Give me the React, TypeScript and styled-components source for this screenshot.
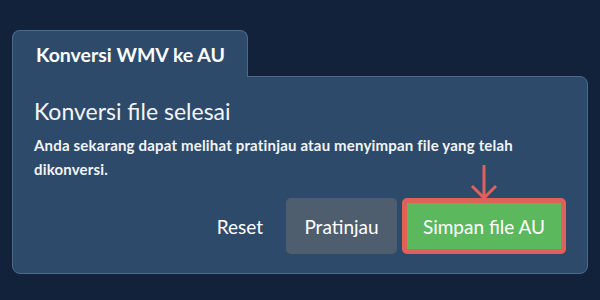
import * as React from 'react';
import styled, { createGlobalStyle } from 'styled-components';

const GlobalStyle = createGlobalStyle`
  html, body {
    margin: 0;
    padding: 0;
    background-color: #11223a;
    font-family: Lato, "Open Sans", sans-serif;
  }
`;

const Page = styled.div`
  width: 600px;
  height: 300px;
  box-sizing: border-box;
  padding: 30px 12px 0 12px;
`;

const Tab = styled.div`
  position: relative;
  z-index: 1;
  display: inline-flex;
  align-items: center;
  box-sizing: border-box;
  width: 236px;
  height: 47px;
  margin-bottom: -1px;
  padding-left: 23px;
  background-color: #2e4a6a;
  border: 1px solid #4d6a8c;
  border-bottom: none;
  border-radius: 8px 8px 0 0;
  color: #ffffff;
  font-size: 19.5px;
  font-weight: 700;
`;

const Panel = styled.div`
  box-sizing: border-box;
  height: 198px;
  padding: 19px 21px 19px 21px;
  background-color: #2e4a6a;
  border: 1px solid #4d6a8c;
  border-radius: 0 8px 8px 8px;
  color: #f2f4f7;
  display: flex;
  flex-direction: column;
`;

const Heading = styled.h2`
  margin: 0;
  font-size: 23px;
  font-weight: 400;
  line-height: 30px;
`;

const Message = styled.p`
  margin: 7px 0 0 0;
  font-size: 15px;
  font-weight: 700;
  line-height: 24px;
  letter-spacing: 0.18px;
`;

const Actions = styled.div`
  margin-top: auto;
  display: flex;
  justify-content: flex-end;
  align-items: center;
  gap: 5px;
`;

const Button = styled.button<{ $variant: 'link' | 'muted' | 'primary' }>`
  position: relative;
  box-sizing: border-box;
  height: 56px;
  padding: 0;
  border-radius: 5px;
  font-family: Lato, "Open Sans", sans-serif;
  font-size: 19px;
  font-weight: 400;
  color: #ffffff;
  cursor: pointer;
  background-color: ${p =>
    p.$variant === 'primary' ? '#5cb85c' : p.$variant === 'muted' ? '#4e5e6f' : 'transparent'};
  border: ${p => (p.$variant === 'primary' ? '5px solid #e0605a' : 'none')};
  margin-right: ${p => (p.$variant === 'link' ? '18px' : '0')};
`;

const Pointer = styled.svg`
  position: absolute;
  left: 50%;
  bottom: 100%;
  margin-bottom: 3px;
  transform: translateX(-50%);
`;

const App: React.FC = () => {
  return (
    <>
      <GlobalStyle />
      <Page>
        <Tab>Konversi WMV ke AU</Tab>
        <Panel>
          <Heading>Konversi file selesai</Heading>
          <Message>
            Anda sekarang dapat melihat pratinjau atau menyimpan file yang telah dikonversi.
          </Message>
          <Actions>
            <Button $variant="link">Reset</Button>
            <Button $variant="muted" style={{ width: 111 }}>Pratinjau</Button>
            <Button $variant="primary" style={{ width: 164 }}>
              Simpan file AU
              <Pointer width="28" height="36" viewBox="0 0 28 36">
                <path
                  d="M14 1 V34 M2 22 L14 34 L26 22"
                  fill="none"
                  stroke="#e0605a"
                  strokeWidth="3"
                />
              </Pointer>
            </Button>
          </Actions>
        </Panel>
      </Page>
    </>
  );
};

export default App;
